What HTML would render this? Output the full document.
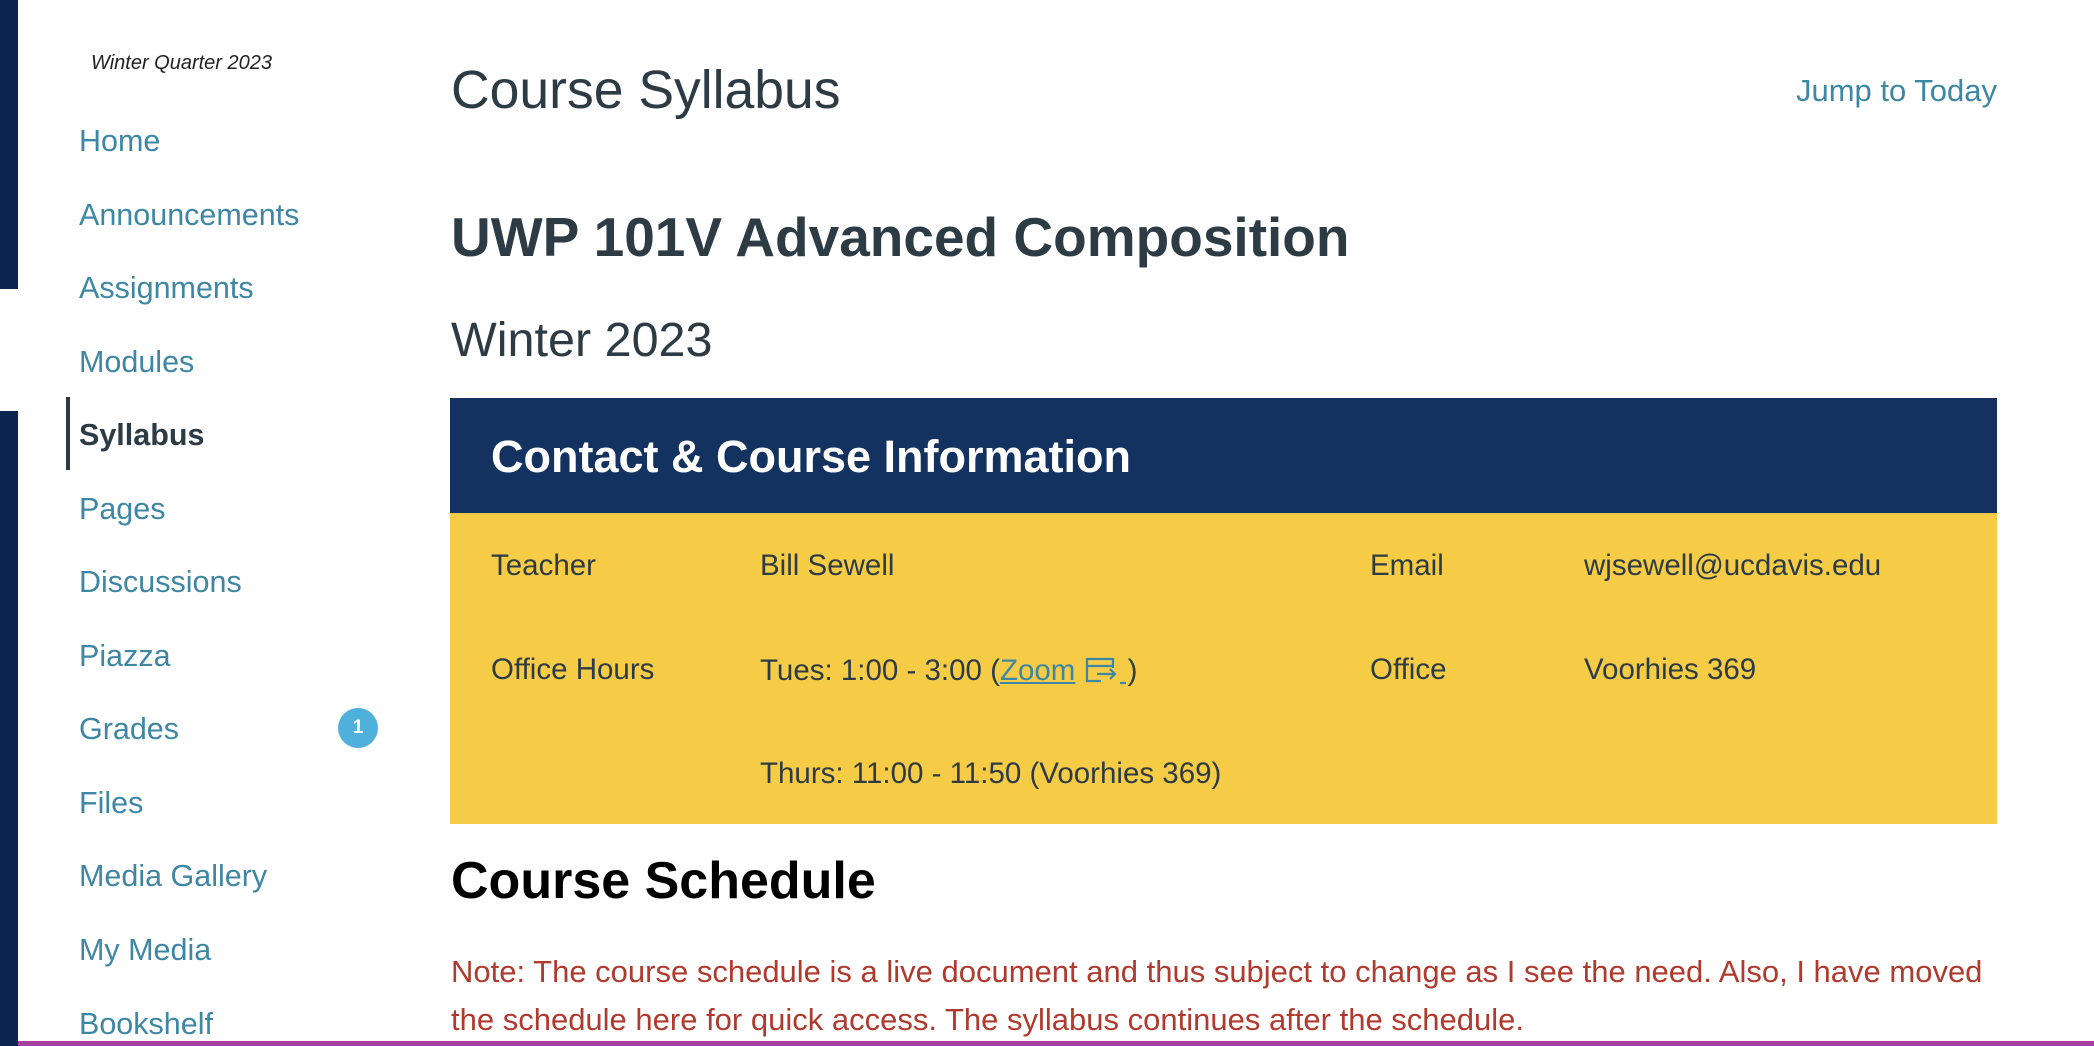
<!DOCTYPE html>
<html><head><meta charset="utf-8"><style>
body{margin:0;width:2094px;height:1046px;position:relative;overflow:hidden;background:#fff;font-family:"Liberation Sans",sans-serif;}
.a{position:absolute;white-space:nowrap;line-height:1;}
.nav{position:absolute;left:79px;font-size:30.5px;color:#3d87a5;white-space:nowrap;line-height:1;}
.c{position:absolute;font-size:29.5px;color:#2d3b45;white-space:nowrap;line-height:1;}
</style></head><body>
<div style="position:absolute;left:0;top:0;width:18px;height:289px;background:#0c2550"></div>
<div style="position:absolute;left:0;top:411px;width:18px;height:635px;background:#0c2550"></div>
<div style="position:absolute;left:18px;top:1041px;width:2076px;height:5px;background:#a7409f"></div>
<div class="a" style="left:91px;top:53px;font-size:20px;font-style:italic;color:#222">Winter Quarter 2023</div>
<div class="nav" style="top:126px">Home</div>
<div class="nav" style="top:200px">Announcements</div>
<div class="nav" style="top:273px">Assignments</div>
<div class="nav" style="top:347px">Modules</div>
<div style="position:absolute;left:66px;top:397px;width:4px;height:73px;background:#2d3b45"></div>
<div class="nav" style="top:420px;color:#2d3b45;font-weight:bold">Syllabus</div>
<div class="nav" style="top:494px">Pages</div>
<div class="nav" style="top:567px">Discussions</div>
<div class="nav" style="top:641px">Piazza</div>
<div class="nav" style="top:714px">Grades</div>
<div style="position:absolute;left:338px;top:708px;width:40px;height:40px;border-radius:50%;background:#4fb0dc;color:#fff;font-size:19px;font-weight:bold;text-align:center;line-height:40px">1</div>
<div class="nav" style="top:788px">Files</div>
<div class="nav" style="top:861px">Media Gallery</div>
<div class="nav" style="top:935px">My Media</div>
<div class="nav" style="top:1009px">Bookshelf</div>

<div class="a" style="left:451px;top:64px;font-size:53.5px;color:#2d3b45">Course Syllabus</div>
<div class="a" style="right:97px;top:75px;font-size:31px;color:#3d87a5">Jump to Today</div>
<div class="a" style="left:451px;top:210px;font-size:55px;font-weight:bold;color:#2d3b45">UWP 101V Advanced Composition</div>
<div class="a" style="left:451px;top:316px;font-size:48.5px;color:#2d3b45">Winter 2023</div>

<div style="position:absolute;left:450px;top:398px;width:1547px;height:115px;background:#13325f"></div>
<div class="a" style="left:491px;top:434px;font-size:45px;font-weight:bold;color:#fff">Contact &amp; Course Information</div>
<div style="position:absolute;left:450px;top:513px;width:1547px;height:311px;background:#f6cc46"></div>
<div class="c" style="left:491px;top:551px">Teacher</div>
<div class="c" style="left:760px;top:551px">Bill Sewell</div>
<div class="c" style="left:1370px;top:551px">Email</div>
<div class="c" style="left:1584px;top:551px">wjsewell@ucdavis.edu</div>
<div class="c" style="left:491px;top:655px">Office Hours</div>
<div class="c" style="left:760px;top:655px">Tues: 1:00 - 3:00 (<span style="color:#3d87a5;text-decoration:underline">Zoom</span> <svg width="44" height="30" viewBox="0 0 44 30" style="vertical-align:-5px"><path d="M17 26H3V4h26v9M3 11h26M13 19h18m-5-5 5 5-5 5" fill="none" stroke="#3d87a5" stroke-width="2.2"/><path d="M36 28h6" stroke="#3d87a5" stroke-width="2.2"/></svg>)</div>
<div class="c" style="left:1370px;top:655px">Office</div>
<div class="c" style="left:1584px;top:655px">Voorhies 369</div>
<div class="c" style="left:760px;top:759px">Thurs: 11:00 - 11:50 (Voorhies 369)</div>

<div class="a" style="left:451px;top:855px;font-size:52px;font-weight:bold;color:#000">Course Schedule</div>
<div class="a" style="left:451px;top:956px;font-size:31px;color:#b03a2e">Note: The course schedule is a live document and thus subject to change as I see the need. Also, I have moved</div>
<div class="a" style="left:451px;top:1004px;font-size:31px;color:#b03a2e">the schedule here for quick access. The syllabus continues after the schedule.</div>
</body></html>
